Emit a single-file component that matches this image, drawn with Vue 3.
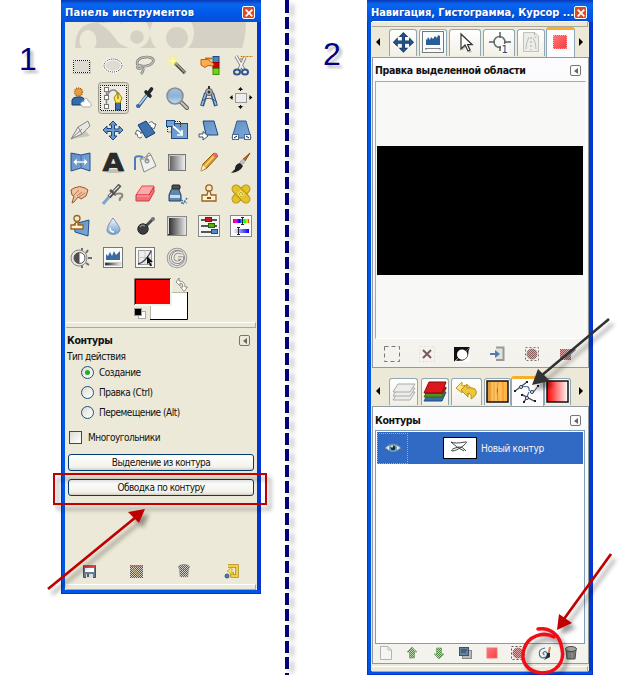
<script setup>
const tools = [
  // rectangle select
  '<rect x="8" y="11" width="18" height="13" fill="#000" opacity=".12"/><rect x="8.500" y="10.500" width="16" height="12" fill="#dedbd0" stroke="#fff"/><rect x="8.500" y="10.500" width="16" height="12" fill="none" stroke="#111" stroke-dasharray="1 1" stroke-dashoffset=".5"/>',
  // ellipse select
  '<ellipse cx="16" cy="15.500" rx="9" ry="6.500" fill="#dedbd0" stroke="#fff" stroke-width="2.500"/><ellipse cx="16" cy="15.500" rx="9" ry="6.500" fill="none" stroke="#222" stroke-dasharray="1 1"/>',
  // free select
  '<g fill="none"><path d="M12 17C6 16 7 9 14 7.500C20 6 26 8 24 12C22 16 15 17 11 15.500C7 16 8 20 12 18C15 17 15 21 12 24" stroke="#777" stroke-width="2.600"/><path d="M12 17C6 16 7 9 14 7.500C20 6 26 8 24 12C22 16 15 17 11 15.500C7 16 8 20 12 18C15 17 15 21 12 24" stroke="#c4c4be" stroke-width="1.200"/></g>',
  // fuzzy select
  '<path d="M14 13L24 23" stroke="#444" stroke-width="3.200"/><path d="M14 12.500L24 22.500" stroke="#a2a294" stroke-width="1.500"/><circle cx="12" cy="11" r="5" fill="#fff460" opacity=".4"/><path d="M12 6l1 4 4 1-4 1-1 4-1-4-4-1 4-1z" fill="#fffca0"/>',
  // select by color
  '<rect x="20" y="6.500" width="6" height="6" fill="#4d83bd" stroke="#204a87"/><rect x="20" y="12.500" width="6" height="6" fill="#d40000" stroke="#900"/><rect x="20" y="18.500" width="6" height="6" fill="#72d216" stroke="#3f8a08"/><path d="M8 9.500H15L21 14L20 16L15 15.500L12 17.500L8 15Z" fill="#fdab54" stroke="#c05e00"/><path d="M12 8.500h7" stroke="#c67412" stroke-width="2"/>',
  // scissors
  '<path d="M16 10V6.500H28" fill="none" stroke="#c47800" stroke-dasharray="2 1"/><path d="M11 6L19 20M20 7L14 20" stroke="#777" stroke-width="3.500"/><path d="M11 6L19 20M20 7L14 20" stroke="#eee" stroke-width="1.800"/><ellipse cx="12" cy="22" rx="3" ry="2.500" fill="none" stroke="#2c5591" stroke-width="2"/><ellipse cx="20" cy="22" rx="3" ry="2.500" fill="none" stroke="#2c5591" stroke-width="2"/>',
  // foreground select
  '<path d="M7 23V18Q8 15 12 15Q19 14 20 19V23Z" fill="#356bad" stroke="#16386c"/><circle cx="13.500" cy="10" r="4" fill="#e89b43" stroke="#a45b08" stroke-width="1.400" stroke-dasharray="1 1"/><path d="M17 24C14 21 17 19 19 20C18 16 23 15 23 19C27 20 27 25 24 25H18Z" fill="#fff" stroke="#aaa"/>',
  // paths (active)
  '<rect x="1.500" y=".5" width="30" height="31" rx="3" fill="#dedacb" stroke="#9b988c"/><rect x="3.500" y="3.500" width="26" height="25" fill="#eeece4" stroke="#111" stroke-dasharray="1 1" stroke-dashoffset=".5"/><path d="M9.500 7V25M10 15Q12 7 17 8Q21 9 21 14" fill="none" stroke="#888" stroke-width="1.500"/><g fill="#fff" stroke="#777"><rect x="7.500" y="5.500" width="4" height="4"/><rect x="7.500" y="13.500" width="4" height="4"/><rect x="7.500" y="22.500" width="4" height="4"/></g><rect x="18.500" y="21" width="5" height="7" fill="#3e6da8" stroke="#173a6c"/><path d="M21 10L17 16L19 21H23L25 16Z" fill="#fce668" stroke="#a58400"/><path d="M21 11V17" stroke="#765d00"/>',
  // color picker
  '<path d="M9 25L18 13" stroke="#244f86" stroke-width="3.200"/><path d="M10 23L18 13" stroke="#b8d9f4" stroke-width="1.600"/><circle cx="9" cy="24" r="2" fill="#356bad"/><path d="M17 10L21 14M19.500 11L22.500 7" stroke="#20262c" stroke-width="3.600" stroke-linecap="round"/>',
  // zoom
  '<path d="M20 20L26 26" stroke="#555" stroke-width="4" stroke-linecap="round"/><path d="M20 20L26 26" stroke="#c5c5c0" stroke-width="2.200" stroke-linecap="round"/><circle cx="14" cy="14" r="8" fill="url(#lens)" stroke="#888f94" stroke-width="1.600"/>',
  // measure
  '<path d="M13 11L9 24M19 11L23 24" stroke="#29568e" stroke-width="4"/><path d="M13 11L9 23M19 11L23 23" stroke="#9fc0de" stroke-width="1.500"/><path d="M9 19Q16 13 24 20" fill="none" stroke="#555"/><circle cx="16" cy="10" r="3.500" fill="#b9b9b9" stroke="#555"/><circle cx="16" cy="10" r="1.500" fill="#333"/><path d="M16 4V7" stroke="#333" stroke-width="2"/>',
  // align
  '<rect x="10.500" y="11.500" width="11" height="9" fill="#ececec" stroke="#999"/><path d="M15.500 9V6M15.500 23V26M8 15.500H5M24 15.500H27" stroke="#111"/><path d="M15.500 5l-2.500 3h5zM15.500 27l-2.500-3h5zM4.500 15.500l3-2.500v5zM27.500 15.500l-3-2.500v5z" fill="#111"/>',
  // crop
  '<path d="M6 25L20 16L25 22L12 24Z" fill="#777" opacity=".3"/><path d="M6 25L13 13L23 7L25 12L17 20Z" fill="#e7e7e3" stroke="#888"/><path d="M6 25L17 15M13 13L17 20" stroke="#888"/>',
  // move
  '<path d="M16 7l4 4h-2.500v4H22V12l4 4-4 4v-2.500h-4.500V22H20l-4 4-4-4h2.500v-4.500H10V20l-4-4 4-4v2.500h4.500V11H12z" fill="#6c9aca" stroke="#1d467e"/>',
  // rotate
  '<path d="M9 11L17 7L26 19L17 24Z" fill="#3e73b1" stroke="#173a6c"/><path d="M20 9Q23 6 25 10H27L25 15L20 12H22" fill="#fff" stroke="#567"/><path d="M13 23Q9 26 8 20H6L8 16L13 19H11" fill="#fff" stroke="#567"/>',
  // scale
  '<rect x="10.500" y="9.500" width="16" height="15" fill="url(#blue)" stroke="#1d4880"/><rect x="5.500" y="6.500" width="8" height="6" fill="#77a3d1" stroke="#1d4880"/><path d="M12 12L21 20M21 16V21H16" fill="none" stroke="#fff" stroke-width="1.700"/><path d="M14 7.500H19.500V13M6.500 13V18H10" fill="none" stroke="#222" stroke-dasharray="1 1"/>',
  // shear
  '<path d="M10 7H21L25 21H13Z" fill="url(#blue)" stroke="#1d4880"/><path d="M6 20h4v-2.500l5 4.500-5 4v-3H6z" fill="#fff" stroke="#456"/>',
  // perspective
  '<path d="M12 7H21L26 24H7Z" fill="url(#blue)" stroke="#315c91"/><rect x="7.500" y="20.500" width="6" height="5" fill="#fff" stroke="#456a95"/><rect x="19.500" y="20.500" width="6" height="5" fill="#fff" stroke="#456a95"/><path d="M9 24l3-2M24 24l-3-2" stroke="#111"/>',
  // flip
  '<path d="M6 7L16 9L25 7V25L16 22L6 25Z" fill="url(#blue)" stroke="#24518b"/><path d="M16 9V22" stroke="#3d6eaa"/><path d="M8 16l4-4v3h7v-3l4 4-4 4v-3h-7v3z" fill="#fff" stroke="#7598bd" stroke-width=".7"/>',
  // text tool: letterform from the system font
  '<ellipse cx="17" cy="25" rx="10" ry="2" fill="#777" opacity=".35"/><text x="16" y="24.500" text-anchor="middle" textLength="21" lengthAdjust="spacingAndGlyphs" font-family="DejaVu Sans" font-size="25" font-weight="700" fill="#292b2d" stroke="#222" stroke-width=".6">A</text>',
  // bucket fill
  '<path d="M6 24V12Q7 9 14 11" fill="none" stroke="#4d7db4" stroke-width="2"/><path d="M11 13L22 9L27 20L15 26Z" fill="#f0f0ed" stroke="#888"/><path d="M12 14L18 12" stroke="#aaa"/><circle cx="18" cy="15" r="2" fill="#ddd" stroke="#777"/><path d="M18 15V9Q20 5 22 9" fill="none" stroke="#888"/>',
  // blend
  '<rect x="7.500" y="8.500" width="17" height="16" fill="url(#gray)" stroke="#777"/><path d="M8.500 23.500V9.500H23.500" fill="none" stroke="#ccc"/>',
  // pencil
  '<path d="M8 25L10 18L21 7L25 10L14 22Z" fill="#d99d34" stroke="#8f5a06"/><path d="M8 25L10 19L13 22Z" fill="#fff0c2"/><path d="M12 20L21 10" stroke="#ffd680" stroke-width="1.500"/><circle cx="22.500" cy="9" r="2.200" fill="#e66"/>',
  // paintbrush
  '<path d="M25 7L18 18L15 16Z" fill="#c86f28" stroke="#8f3f0c"/><path d="M19 14L15 19" stroke="#c0c0c0" stroke-width="4"/><path d="M15 17Q10 18 10 23L6 27Q15 26 18 20Z" fill="#1e2424"/>',
  // smudge
  '<path d="M6 12L9 10Q15 7 20 10L23 12L21 18L16 21L13 19L9 24L7 25L9 18L7 17Z" fill="#f1c29f" stroke="#9c562c"/><path d="M12 18L17 14M14 19L20 15M9 17L14 12" stroke="#b97a55"/>',
  // airbrush
  '<path d="M6 26L12 19" stroke="#79a6cf" stroke-width="3"/><path d="M12 19L23 7" stroke="#4b4f50" stroke-width="4"/><path d="M12 18L22 8" stroke="#e1e1df" stroke-width="1.300"/><path d="M13 12L19 17" stroke="#555" stroke-width="2.500"/><path d="M18 16Q27 14 25 19Q22 20 23 23" fill="none" stroke="#8b8b86" stroke-width="2"/>',
  // eraser
  '<path d="M7 17L13 8H25L20 17Z" fill="#ffa8ab" stroke="#df4c54"/><path d="M7 17H20L25 9V14L20 23H7Z" fill="#f36e75" stroke="#d43c45"/><path d="M8 18H20" stroke="#ffb3b7"/>',
  // ink
  '<path d="M13 8L10 12L8 17V23H20V17L18 12L19 9Z" fill="#6187af" stroke="#233e60"/><rect x="11" y="7" width="8" height="4" rx="1" fill="#4a5055" stroke="#222"/><path d="M9 17H19V20H9Z" fill="#c7dcf1"/><path d="M20 22L26 25M26 20L22 26M20 25h3" stroke="#46739e" stroke-width="1.500" stroke-dasharray="2 1"/>',
  // clone
  '<circle cx="16" cy="10" r="3.200" fill="#f9e7cc" stroke="#9b6420" stroke-width="1.300"/><path d="M15 13H17L18 17H23V23H9V17H14Z" fill="#fff0cf" stroke="#9b6420" stroke-width="1.300"/><path d="M14 20h4" stroke="#815225" stroke-width="2"/>',
  // heal
  '<g fill="#e2c32d" stroke="#b69508"><rect x="5" y="12" width="22" height="8" rx="4" transform="rotate(-45 16 16)"/><rect x="5" y="12" width="22" height="8" rx="4" transform="rotate(45 16 16)"/></g><path d="M12 16l4-4 4 4-4 4z" fill="#f0dc62"/><path d="M14 16h1M17 16h1M16 14v1M16 18v1" stroke="#987e00"/>',
  // perspective clone
  '<path d="M9 14L24 10L23 26L10 22Z" fill="url(#blue)" stroke="#234f88"/><circle cx="12" cy="8.500" r="3" fill="#fae6ca" stroke="#99651f" stroke-width="1.300"/><path d="M11 12H13V15H18V19H6V15H10Z" fill="#fff0cf" stroke="#99651f" stroke-width="1.300"/>',
  // blur
  '<path d="M16 8Q10 16 10 20C10 26 23 26 23 19Q22 16 16 8Z" fill="url(#drop)" stroke="#7795b5"/><path d="M13 18Q13 22 17 22" fill="none" stroke="#fff" stroke-width="1.500"/>',
  // dodge and burn
  '<path d="M15 18L24 9" stroke="#4b4d4e" stroke-width="3"/><circle cx="14" cy="19" r="5.200" fill="#3a3e40" stroke="#222"/><path d="M11 17Q13 14 16 16" fill="none" stroke="#888" stroke-width="1.500"/><circle cx="24" cy="9" r="2" fill="#777"/>',
  // gradient panel
  '<rect x="6.500" y="6.500" width="19" height="19" fill="url(#dark)" stroke="#888"/><path d="M7.500 24V7.500H24" fill="none" stroke="#ddd"/>',
  // levels
  '<rect x="5.500" y="5.500" width="21" height="21" fill="#f4f4f2" stroke="#888"/><path d="M8 10H24M8 16H24M8 22H24" stroke="#555" stroke-width="2"/><rect x="12.500" y="7.500" width="6" height="4" fill="#d11616" stroke="#811"/><rect x="15.500" y="13.500" width="6" height="4" fill="#5eae13" stroke="#286306"/><rect x="18.500" y="19.500" width="6" height="4" fill="#508bc6" stroke="#204a87"/>',
  // hue and saturation
  '<rect x="5.500" y="5.500" width="21" height="21" fill="#fbfbf9" stroke="#888"/><rect x="8" y="9" width="16" height="4" fill="url(#rainbow)"/><rect x="8" y="19" width="16" height="4" fill="url(#saturation)"/><path d="M16 7.500h3M17.500 8v6M16 14.500h3M12 17.500h3M13.500 18v6M12 24.500h3" stroke="#222"/>',
  // brightness and contrast
  '<path d="M17 6V9M23 8L21 11M27 16H23M24 23L21 21M17 26V23" stroke="#6d6d6d" stroke-width="2"/><circle cx="14" cy="16" r="8" fill="#e7e5de" stroke="#888"/><circle cx="14.500" cy="16" r="5.500" fill="#fff" stroke="#555"/><path d="M14.500 10.500A5.500 5.500 0 0 0 14.500 21.500Z" fill="#4f4f4f"/>',
  // histogram
  '<rect x="6.500" y="5.500" width="19" height="20" fill="#fafaf8" stroke="#777"/><path d="M9 18V12L11 14L13 10L15 14L17 9L19 13L21 11L23 9V18Z" fill="#3b6b9e"/><rect x="8" y="20.500" width="16" height="3" fill="url(#dark)" stroke="#bbb" stroke-width=".5"/>',
  // curves
  '<rect x="6.500" y="5.500" width="19" height="20" fill="#fafaf8" stroke="#777"/><rect x="9.500" y="8.500" width="13" height="14" fill="#eeeeec" stroke="#999"/><path d="M16 8V23M9 15.500H23" stroke="#bbb" stroke-width=".7"/><path d="M9 22Q17 20 22 9" fill="none" stroke="#444" stroke-width="1.300"/><path d="M18 14L24 20H21L23 24L21 24L20 21L18 22Z" fill="#111"/>',
  // gegl
  '<circle cx="16" cy="16" r="8.700" fill="none" stroke="#888" stroke-width="3"/><circle cx="16" cy="16" r="8.700" fill="none" stroke="#ddd" stroke-width="1.500"/><path d="M21 11Q14 8 12 14C10 22 21 22 21.500 16H17" fill="none" stroke="#777" stroke-width="3.200"/><path d="M21 11Q14 8 12 14C10 22 21 22 21.500 16H17" fill="none" stroke="#f1f0eb" stroke-width="1.700"/>'
]

const topTabs = [
  { w: 28, gap: 2, art: '<g transform="translate(-3.200 -2.500) scale(1.040)"><path d="M16 7l3.500 3.500h-2.500v4.500H22V12.500l3.500 3.500-3.500 3.500v-2.500h-5V22H19.500l-3.500 3.500-3.500-3.500h2.500v-5H10V19.500l-3.500-3.500 3.500-3.500v2.500h5V10.500H12.500z" fill="#24588f" stroke="#173f70"/></g>' },
  { w: 28, gap: 2, art: '<rect x="2.500" y="3.500" width="21" height="21" fill="#fbfbfa" stroke="#727b82"/><path d="M6 17V11L7 12L8 9L10 12L11 9L13 11L15 8L17 10L18 7L20 8V17Z" fill="#285d99"/><path d="M5 20.500H20M6 22V20M20 22V20" stroke="#888"/>' },
  { w: 32, gap: 2, art: '<path d="M10 7V23L14 19L17 25L20 24L17 18H22Z" fill="#999" opacity=".5"/><path d="M9 6V21L13 17L16 23L18 22L15.500 16.500H20Z" fill="#fff" stroke="#333" stroke-width="1.200"/>' },
  { w: 32, gap: 2, art: '<circle cx="13.500" cy="14" r="5.500" fill="none" stroke="#5d7071" stroke-width="1.500"/><path d="M3 14H9M18 14H25M14 4V10M14 18V23" stroke="#4f6263" stroke-width="1.500"/><rect x="15" y="16" width="8" height="10" fill="#fafafa"/><text x="15.500" y="25" font-family="DejaVu Sans" font-size="10" fill="#194c78">1</text>' },
  { w: 28, gap: 2, art: '<path d="M5.500 4.500H17L20.500 8V23.500H5.500Z" fill="#ecece9" stroke="#c1c1bd"/><path d="M16.500 5V9H20M13 9V22" fill="none" stroke="#aaa" stroke-dasharray="2 2"/><path d="M8 21Q8 14 11 9M18 21Q18 14 15 10" fill="none" stroke="#bbb"/>' },
  { w: 29, gap: 0, art: '<rect x="6.500" y="7.500" width="13" height="13" fill="url(#redSelection)" stroke="#f5484b" stroke-dasharray="1 1" stroke-dashoffset=".5"/>' }
]

const dockTabs = [
  { w: 29, gap: 3, art: '<g fill="#ededeb" stroke="#aaa"><path d="M8 15H25L20 23H3Z"/><path d="M8 11H25L20 19H3Z"/><path d="M8 7H25L20 15H3Z"/></g>' },
  { w: 28, gap: 2, art: '<path d="M7 15H24L20 24H2Z" fill="#356ca5" stroke="#204a87"/><path d="M7 11H24L20 20H2Z" fill="#559025" stroke="#2e6907"/><path d="M7 5H24L20 16H2Z" fill="#dc171d" stroke="#8e080b"/><path d="M3 16H20L24 10" fill="none" stroke="#aa1115" stroke-width="2"/>' },
  { w: 31, gap: 2, art: '<g transform="translate(-1 -1)"><path d="M10 6L4 12L10 17V14H14Q17 15 15 19Q20 18 19 12Q17 8 10 10Z" fill="#ffe37d" stroke="#c7981a"/><path d="M15 8L9 14L16 21V17Q20 17 19 23Q27 18 23 13Q20 11 15 12Z" fill="#ecc83d" stroke="#bd8e11"/></g>' },
  { w: 27, gap: 0, art: '<rect x="3" y="4" width="21" height="21" fill="url(#wood)" stroke="#111" stroke-width="1.500"/><path d="M6 5V24M10 5V24M14 5Q12 13 14 24M19 5V24" stroke="#df8b16" opacity=".7"/>' },
  { w: 33, gap: 0, art: '<path d="M1 14L13 5M7 10Q16 8 15 13Q18 17 23 11M8 18L20 24M15 15L11 24" fill="none" stroke="#4068a0" stroke-width="1.100"/><path d="M1 14L13 5M19 16L24 9M8 17L20 24M10 24L14 19" stroke="#444" stroke-width=".8"/><g fill="#fff" stroke="#333"><circle cx="7" cy="10" r="1.500"/><circle cx="18" cy="15" r="1.500"/><circle cx="13" cy="21" r="1.500"/></g><path d="M0 13h2v2H0zM12 4h2v2h-2zM7 17h2v2H7zM20 23h2v2h-2zM9 24h2v2H9zM23 8h2v2h-2z" fill="#222"/>' },
  { w: 27, gap: 0, art: '<rect x="3" y="4" width="21" height="21" fill="url(#redFade)" stroke="#111" stroke-width="1.500"/>' }
]

const selectionActions = [
  '<rect x="1.500" y="1.500" width="15" height="15" fill="none" stroke="#777" stroke-dasharray="4 3"/>',
  '<rect x="1.500" y="1.500" width="15" height="15" fill="none" stroke="#ddd" stroke-dasharray="2 2"/><path d="M5 5l8 8M13 5l-8 8" stroke="#7b5a5a" stroke-width="2"/>',
  '<path d="M1 2H17L1 17Z" fill="#111"/><path d="M17 2V17H1Z" fill="#fbfbfb"/><circle cx="9" cy="9.500" r="5" fill="#fff"/><path d="M13 6A5 5 0 0 1 5.500 13L3 16L10 15.500Q16 13 15.500 6L17 2Z" fill="#111"/>',
  '<path d="M8 2.500H15.500V15H8" fill="#e2e2dd" stroke="#999" stroke-width="2"/><path d="M2 8h5V5l5 4-5 4v-3H2z" fill="#4c7fac"/>',
  '<rect x="2.500" y="2.500" width="13" height="13" fill="none" stroke="#777" stroke-dasharray="2 2"/><circle cx="9" cy="9" r="5.500" fill="url(#pinkMesh)"/>',
  '<rect x="2" y="4" width="11" height="11" fill="url(#pinkMesh)"/><path d="M7 13L17 4" stroke="#777" stroke-width="3"/>'
]

const leftActions = [
  '<path d="M3.500 3.500H15.500V15.500H3.500Z" fill="#687c91" stroke="#46515e"/><path d="M4 4h11" stroke="#e54042" stroke-width="2"/><rect x="5" y="6" width="9" height="4" fill="#fff"/><rect x="6" y="12" width="7" height="4" fill="#ddd"/><rect x="7" y="12" width="2" height="3" fill="#556"/>',
  '<rect x="3" y="3" width="13" height="13" fill="url(#grayMesh)"/><path d="M3 4h13" stroke="#b66"/><path d="M6 7L12 14" stroke="#bb9d31" stroke-width="2" opacity=".7"/>',
  '<path d="M4 6H14L13 15H5Z" fill="url(#grayMesh)" stroke="#aaa" stroke-width=".5"/><ellipse cx="9" cy="5" rx="5.500" ry="2.500" fill="url(#grayMesh)" stroke="#888" stroke-width=".7"/>',
  '<path d="M6 4H15V14H10V10" fill="none" stroke="#af8b0b" stroke-width="3.500"/><path d="M6 4H15V14H10V10M6 9H9" fill="none" stroke="#efcf45" stroke-width="2"/><path d="M10 5V13L5 9Z" fill="#f6dc5e" stroke="#af8b0b" stroke-width=".5"/><circle cx="5" cy="14" r="2" fill="#4f7daf" stroke="#315986"/>'
]

const pathActions = [
  '<path d="M3.500 2.500H11L14.500 6V15.500H3.500Z" fill="#f5f5f3" stroke="#b3b3ae"/><path d="M11 3V6H14" fill="none" stroke="#bbb"/>',
  '<path d="M9 3L14 8H11.500V14H6.500V8H4Z" fill="url(#greenMesh)" stroke="#719c69" stroke-width=".7"/>',
  '<path d="M9 15L14 10H11.500V4H6.500V10H4Z" fill="url(#greenMesh)" stroke="#719c69" stroke-width=".7"/>',
  '<rect x="6.500" y="6.500" width="9" height="8" fill="#bbb" stroke="#888"/><rect x="3.500" y="3.500" width="9" height="8" fill="#65829f" stroke="#3c536b"/><path d="M5 6h6M5 8h5" stroke="#273f5b"/>',
  '<rect x="4" y="4" width="10" height="10" fill="url(#redSelection)" stroke="#f17779"/>',
  '<rect x="2.500" y="2.500" width="13" height="13" fill="none" stroke="#555" stroke-dasharray="2 2"/><circle cx="9" cy="9" r="5.500" fill="url(#pinkMesh)"/>',
  '<path d="M9 4Q2 5 3.500 11Q5 15.500 10 13Q13 9 9 7.500Q5.500 9 8.500 11" fill="none" stroke="#446d92" stroke-width="1.200"/><path d="M14 3L12.500 10" stroke="#ce8a4f" stroke-width="2"/><path d="M11 9h3v4L8 16Q10 13 11 12Z" fill="#252d30"/>',
  '<path d="M4 6H14L13 15H5Z" fill="#777975" stroke="#51534f"/><ellipse cx="9" cy="5" rx="5.500" ry="2.500" fill="#a3a4a1" stroke="#4c4e49"/><path d="M7 9V14M10 9V14" stroke="#a1a29e"/>'
]

const modes = [
  { label: 'Создание', on: true },
  { label: 'Правка (Ctrl)', on: false },
  { label: 'Перемещение (Alt)', on: false }
]
</script>

<template>
  <main class="stage">
    <svg class="defs" width="0" height="0">
      <defs>
        <linearGradient id="blue" x2="1" y2="1"><stop stop-color="#5e91c9"/><stop offset="1" stop-color="#7fa9d5"/></linearGradient>
        <linearGradient id="gray"><stop stop-color="#555"/><stop offset="1" stop-color="#f4f4f4"/></linearGradient>
        <linearGradient id="dark"><stop stop-color="#222"/><stop offset="1" stop-color="#eee"/></linearGradient>
        <linearGradient id="drop" x2="0" y2="1"><stop stop-color="#f8fbff"/><stop offset="1" stop-color="#6e9bcb"/></linearGradient>
        <linearGradient id="lens" x2="0" y2="1"><stop stop-color="#a6c2dd"/><stop offset=".5" stop-color="#8db2d7"/><stop offset="1" stop-color="#c4def3"/></linearGradient>
        <linearGradient id="rainbow"><stop stop-color="red"/><stop offset=".2" stop-color="#f0f"/><stop offset=".4" stop-color="blue"/><stop offset=".6" stop-color="#0ff"/><stop offset=".75" stop-color="#0f0"/><stop offset=".88" stop-color="#ff0"/><stop offset="1" stop-color="red"/></linearGradient>
        <linearGradient id="saturation"><stop stop-color="#fff"/><stop offset="1" stop-color="#00f"/></linearGradient>
        <linearGradient id="redFade"><stop stop-color="red"/><stop offset="1" stop-color="#fff"/></linearGradient>
        <linearGradient id="redSelection" x2="1" y2="1"><stop stop-color="#ff7778"/><stop offset="1" stop-color="#f53d40"/></linearGradient>
        <linearGradient id="wood"><stop stop-color="#dc8d28"/><stop offset=".3" stop-color="#ffc66c"/><stop offset="1" stop-color="#ffb13f"/></linearGradient>
        <pattern id="pinkMesh" width="2" height="2" patternUnits="userSpaceOnUse"><rect width="2" height="2" fill="#dca4a4"/><path d="M0 0h1v1H0zM1 1h1v1H1z" fill="#886060"/></pattern>
        <pattern id="grayMesh" width="2" height="2" patternUnits="userSpaceOnUse"><rect width="2" height="2" fill="#d5d2c8"/><path d="M0 0h1v1H0zM1 1h1v1H1z" fill="#555"/></pattern>
        <pattern id="greenMesh" width="2" height="2" patternUnits="userSpaceOnUse"><rect width="2" height="2" fill="#bfd8b4"/><path d="M0 0h1v1H0zM1 1h1v1H1z" fill="#4c873e"/></pattern>
      </defs>
    </svg>

    <div class="step step-one">1</div>
    <section class="window toolbox">
      <header class="titlebar"><span class="title-left">Панель инструментов</span><i class="close"><svg width="10" height="10" viewBox="0 0 12 12"><path d="M2 2l8 8M10 2l-8 8" stroke="#fff" stroke-width="2"/></svg></i></header>
      <div class="client">
        <svg class="banner" width="192" height="28" viewBox="0 0 192 28">
          <path d="M10 26Q10 0 34 0H181Q181 14 177 26Z" fill="#d5d2c5"/>
          <path d="M47 0H56Q50 14 61 24Q54 23 50 16Q43 6 33 1Q42 1 47 0" fill="#ece9d8"/>
          <ellipse cx="23" cy="19" rx="8.500" ry="11" fill="#ece9d8"/>
          <circle cx="69" cy="11" r="16" fill="#ece9d8"/><circle cx="72" cy="15" r="6.800" fill="#d5d2c5"/>
          <circle cx="107" cy="11" r="22" fill="#ece9d8"/><circle cx="112" cy="16" r="11" fill="#d5d2c5"/>
          <path d="M0 26H192V28H0Z" fill="#ece9d8"/>
        </svg>
        <div class="tool-grid">
          <svg v-for="(art, i) in tools" :key="i" width="32" height="32" viewBox="0 0 32 32" v-html="art"></svg>
        </div>
        <div class="colors">
          <svg width="56" height="44" viewBox="0 0 56 44">
            <rect x="16" y="14" width="38" height="28" fill="#fff"/><path d="M53.500 14V41.500H16" fill="none" stroke="#000"/><path d="M16.500 41V14.500H53" fill="none" stroke="#b9b6a9"/>
            <rect width="38" height="28" fill="#f5f2e9"/><rect x="1" y="1" width="35" height="25" fill="#f00"/><path d="M.5 27V.5H37" fill="none" stroke="#77746b"/><path d="M1.500 26V1.500H36" fill="none" stroke="#111"/>
            <path d="M45 0L42 4L46 8V5Q49 5 49 9H46.500L50 13.500L53.500 9H51Q51 3 45 3Z" fill="#fff" stroke="#77746d" stroke-width=".8"/>
            <rect x="4.500" y="33.500" width="7" height="7" fill="#fff" stroke="#aaa"/><rect x=".5" y="30.500" width="7" height="7" fill="#000" stroke="#999"/>
          </svg>
        </div>
        <div class="grip"></div>
        <div class="options">
          <div class="heading"><b>Контуры</b><span class="collapse"></span></div>
          <p class="mode-title">Тип действия</p>
          <div v-for="mode in modes" :key="mode.label" class="mode"><i class="radio" :class="{ on: mode.on }"></i><span>{{ mode.label }}</span></div>
          <div class="check-row"><i class="check"></i><span>Многоугольники</span></div>
          <button class="command">Выделение из контура</button>
          <button class="command">Обводка по контуру</button>
        </div>
        <div class="left-actions"><svg v-for="(art, i) in leftActions" :key="i" width="18" height="18" viewBox="0 0 18 18" v-html="art"></svg></div>
        <div class="grip bottom-grip"></div>
      </div>
    </section>

    <div class="divider"></div>
    <div class="step step-two">2</div>
    <section class="window dock">
      <header class="titlebar"><span class="title-right">Навигация, Гистограмма, Курсор ...</span><i class="close"><svg width="10" height="10" viewBox="0 0 12 12"><path d="M2 2l8 8M10 2l-8 8" stroke="#fff" stroke-width="2"/></svg></i></header>
      <div class="client dock-client">
        <div class="grip dock-grip"></div>
        <div class="tabs">
          <i class="arrow-left"></i>
          <div v-for="(tab, i) in topTabs" :key="i" class="tab" :class="{ active: i === 5, last: i === 5 }" :style="{ width: tab.w + 'px', marginRight: tab.gap + 'px' }"><svg width="27" height="27" viewBox="0 0 27 27" v-html="tab.art"></svg></div>
          <i class="arrow-right"></i>
        </div>
        <div class="panel selection-panel">
          <div class="heading"><b>Правка выделенной области</b><span class="collapse"></span></div>
          <div class="preview"><div class="canvas"></div></div>
          <div class="selection-actions"><svg v-for="(art, i) in selectionActions" :key="i" width="18" height="18" viewBox="0 0 18 18" v-html="art"></svg></div>
        </div>
        <div class="tabs dock-tabs">
          <i class="arrow-left"></i>
          <div v-for="(tab, i) in dockTabs" :key="i" class="tab" :class="{ active: i === 4 }" :style="{ width: tab.w + 'px', marginRight: tab.gap + 'px' }"><svg width="27" height="27" viewBox="0 0 27 27" v-html="tab.art"></svg></div>
          <i class="arrow-right"></i>
        </div>
        <div class="panel paths-panel">
          <div class="heading"><b>Контуры</b><span class="collapse"></span></div>
          <div class="path-list">
            <div class="path-row">
              <div class="visibility"><svg width="18" height="14" viewBox="0 0 18 14"><path d="M1 7Q9-1 17 7Q9 14 1 7Z" fill="#dce8ed" stroke="#777d83"/><circle cx="9" cy="7" r="4" fill="#659bbb"/><circle cx="9" cy="7" r="2.300" fill="#112b48"/><circle cx="8" cy="5.500" r="1" fill="#fff"/></svg></div>
              <svg class="path-thumb" width="34" height="22" viewBox="0 0 34 22"><rect x=".5" y=".5" width="33" height="21" fill="#fff" stroke="#000"/><path d="M8 5Q12 7 22 5Q26 4 20 9Q13 14 9 14Q7 12 16 10Q19 9 23 14M8 5Q13 10 21 14" fill="none" stroke="#444"/></svg>
              <span>Новый контур</span>
            </div>
          </div>
          <div class="path-actions"><svg v-for="(art, i) in pathActions" :key="i" width="18" height="18" viewBox="0 0 18 18" v-html="art"></svg></div>
        </div>
        <div class="grip end-grip"></div>
      </div>
    </section>

    <svg class="annotations" width="630" height="675" viewBox="0 0 630 675">
      <defs><filter id="shadow" x="-20%" y="-20%" width="150%" height="150%"><feDropShadow dx="4" dy="5" stdDeviation="2" flood-opacity=".38"/></filter></defs>
      <g filter="url(#shadow)">
        <rect x="54" y="474" width="212" height="30" fill="none" stroke="#be0000" stroke-width="2"/>
        <path d="M48 589L136 517" stroke="#be0000" stroke-width="2.700"/><path d="M145 509L128 512L139 523Z" fill="#be0000"/>
      </g>
      <g filter="url(#shadow)"><path d="M609 319L541 376" stroke="#333" stroke-width="2.500"/><path d="M532 385L538 369L550 381Z" fill="#333"/></g>
      <g filter="url(#shadow)"><path d="M611 554L564 619" stroke="#be0000" stroke-width="2.700"/><path d="M557 630L559 614L572 623Z" fill="#be0000"/><path d="M538 629C549 627 560 634 562 649C565 662 556 673 542 673C527 672 520 661 524 649C528 636 543 631 554 637" fill="none" stroke="#f00d18" stroke-width="3.500" stroke-linecap="round"/></g>
    </svg>
  </main>
</template>

<style>
html, body { margin: 0; background: #fff; overflow: hidden; }
</style>

<style scoped>
* { box-sizing: border-box; }
.stage { position: relative; display: flex; align-items: flex-start; width: 630px; height: 675px; overflow: hidden; font: 10px/13px "DejaVu Sans Condensed", "DejaVu Sans", sans-serif; letter-spacing: -.5px; color: #111; }
.defs, .annotations { position: absolute; inset: 0; pointer-events: none; }
svg { display: block; flex: none; }
.step { flex: none; font: 32px/36px "Liberation Sans", sans-serif; color: #000080; text-shadow: 3px 3px 3px #bbb; letter-spacing: 0; }
.step-one { width: 61px; padding: 41px 0 0 19px; }
.step-two { width: 78px; padding: 36px 0 0 34px; }
.window { flex: none; background: #ece9d8; border: solid #0831d9; border-width: 0 1px 1px; box-shadow: inset 3px -3px #0055e5, inset -3px 0 #003ac8; }
.toolbox { width: 200px; height: 594px; }
.dock { width: 226px; height: 675px; }
.titlebar { display: flex; align-items: center; justify-content: space-between; height: 22px; margin: 0 -1px; padding: 3px 4px 0; background: linear-gradient(#0838b8 0, #0866ef 4px, #0058e8 14px, #0550d6); color: #fff; font: bold 11px/15px "DejaVu Sans Condensed", sans-serif; white-space: nowrap; text-shadow: 1px 1px #093fae; }
.title-left { letter-spacing: .24px; }
.title-right { width: 200px; letter-spacing: -.05px; }
.close { display: grid; place-items: center; width: 13px; height: 13px; flex: none; margin-right: 2px; border: 1px solid #fff; border-radius: 2px; background: #d94b27; }
.client { display: flex; flex-direction: column; margin: 0 3px; height: 568px; background: #ece9d8; }
.banner { flex: none; }
.tool-grid { display: grid; grid-template-columns: repeat(6, 32px); grid-auto-rows: 32px; }
.colors { padding: 4px 0 1px 69px; height: 48px; }
.grip { flex: none; height: 6px; margin: 0 1px; border-top: 1px solid #fff; border-right: 1px solid #aaa79b; border-bottom: 1px solid #aaa79b; }
.options { display: flex; flex-direction: column; padding: 6px 3px 0 2px; }
.heading { display: flex; align-items: center; justify-content: space-between; height: 13px; font-size: 10.5px; letter-spacing: -.32px; }
.heading b { font-weight: bold; }
.collapse { display: grid; place-items: center; width: 11px; height: 11px; margin-right: 4px; border: 1px solid #77756f; border-radius: 2px; }
.collapse::before { content: ""; border: solid transparent; border-width: 3px 4px 3px 0; border-right-color: #666; }
p { margin: 0; }
.mode-title { height: 13px; margin-top: 3px; }
.mode { display: flex; align-items: center; height: 20px; padding-left: 14px; }
.mode-title + .mode { margin-top: -1px; }
.radio { display: grid; place-items: center; width: 13px; height: 13px; margin-right: 5px; border: 1px solid #1c5180; border-radius: 50%; background: linear-gradient(135deg, #dcdcd4, #fff); }
.radio.on::after { content: ""; width: 5px; height: 5px; border-radius: 50%; background: #28ad25; }
.check-row { display: flex; align-items: center; height: 13px; margin: 9px 0 10px 2px; }
.check { width: 13px; height: 13px; margin-right: 6px; border: 1px solid #1c5180; background: linear-gradient(135deg, #dcdcd4, #fff); }
.command { width: 186px; height: 17px; margin: 0 0 8px 1px; padding: 0; border: 1px solid #003c74; border-radius: 3px; background: linear-gradient(#fff, #f3f2eb 80%, #d6d0c3); color: #111; font: inherit; line-height: 14px; letter-spacing: -.5px; }
.left-actions { display: flex; justify-content: space-between; padding: 0 17px 0 15px; margin-top: auto; height: 21px; }
.bottom-grip { margin-top: 1px; height: 6px; }
.divider { flex: none; align-self: stretch; width: 4px; margin: 0 0 0 24px; background: repeating-linear-gradient(#000080 0 12px, transparent 12px 16px); background-position: 0 1px; filter: drop-shadow(5px 4px 2px #ccc); }
.dock-client { width: 218px; height: 649px; }
.dock-grip { height: 6px; margin-top: -1px; }
.tabs { display: flex; align-items: flex-end; flex: none; height: 29px; }
.tab { display: flex; justify-content: center; flex: none; height: 27px; border: 1px solid #91a7b4; border-bottom: 0; border-radius: 3px 3px 0 0; background: linear-gradient(#fff, #f1f0e8); overflow: hidden; }
.tab svg { margin-top: -2px; }
.tab.active { height: 30px; margin-bottom: -1px; background: #fcfcfe; border-top: 3px solid #f6af26; }
.tab.last { margin-left: -1px; }
.arrow-left, .arrow-right { align-self: center; flex: none; border: solid transparent; }
.arrow-left { margin: 0 9px 0 5px; border-width: 4px 4px 4px 0; border-right-color: #000; }
.arrow-right { margin: 0 6px 0 auto; border-width: 4px 0 4px 4px; border-left-color: #000; }
.panel { display: flex; flex-direction: column; flex: none; width: 217px; margin-left: 1px; border: 1px solid #919b9c; background: #fcfcfe; }
.selection-panel { height: 311px; margin-top: 1px; padding-top: 6px; background: linear-gradient(#fcfcfe, #f3f2ec); }
.panel .heading { padding: 0 3px 0 2px; flex: none; }
.preview { flex: none; height: 258px; margin: 4px 2px 0; padding: 64px 2px 0 1px; border: 1px solid #aaa99f; border-right-color: #fff; border-bottom-color: #fff; background: #f8f8f7; }
.canvas { height: 129px; background: #000; }
.selection-actions { display: flex; justify-content: space-between; margin: 6px 12px 0 10px; height: 18px; }
.dock-tabs { height: 29px; margin-top: 8px; }
.paths-panel { height: 258px; margin-top: 1px; padding-top: 7px; background: linear-gradient(#fcfcfe, #f3f2ec); }
.path-list { flex: none; height: 214px; margin: 3px 3px 0 2px; padding: 1px; border: 1px solid #7f9db9; background: #fff; }
.path-row { display: flex; align-items: center; height: 32px; background: #316ac5; color: #f5f5ed; letter-spacing: -.3px; }
.visibility { display: grid; place-items: center; width: 31px; height: 31px; border: 1px dotted #d8a452; }
.path-thumb { margin: 0 4px 0 35px; }
.path-actions { display: flex; justify-content: space-between; margin: 0 8px 0 4px; height: 18px; }
.end-grip { margin-top: 2px; height: 6px; }
</style>
